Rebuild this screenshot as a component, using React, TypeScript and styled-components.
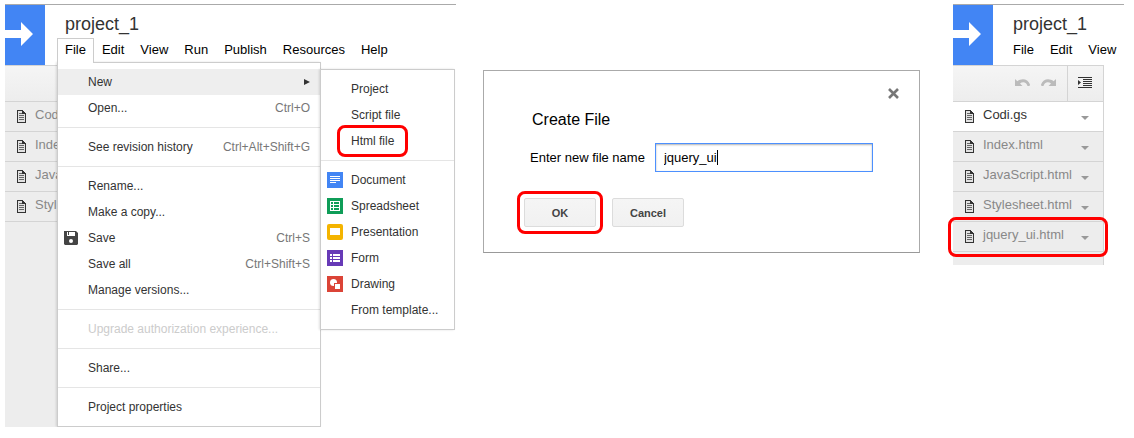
import React from "react";
import styled, { createGlobalStyle, css } from "styled-components";

const GlobalStyle = createGlobalStyle`
  *, *::before, *::after { box-sizing: border-box; }
  body {
    margin: 0;
    background: #fff;
    color: #000;
    font-family: "Liberation Sans", Arial, sans-serif;
    font-size: 13px;
  }
  button, input { font: inherit; color: inherit; }
`;

const Page = styled.main`
  display: grid;
  grid-template-columns: minmax(0, 451fr) minmax(0, 437fr) minmax(0, 177fr);
  column-gap: 27px;
  align-items: start;
  padding: 4px 10px 0 5px;
`;

const Editor = styled.section<{ $inset?: boolean }>`
  display: flex;
  flex-direction: column;
  margin-left: ${(p) => (p.$inset ? 6 : 0)}px;
`;

const Header = styled.header`
  display: flex;
  height: 61px;
  border-top: 1px solid #aaa;
`;

const Logo = styled.div`
  display: flex;
  align-items: center;
  flex: none;
  width: 40px;
  height: 60px;
  padding-bottom: 2px;
  background: #4285f4;
`;

const Heading = styled.div`
  display: flex;
  flex-direction: column;
  padding-left: 12px;
`;

const ProjectName = styled.h1`
  margin: 0;
  padding: 8px 8px 0;
  height: 33px;
  font-size: 18px;
  line-height: 22px;
  font-weight: 400;
  color: #333;
`;

const MenuBar = styled.nav`
  display: flex;
`;

const MenuHolder = styled.div`
  position: relative;
`;

const MenuBarButton = styled.button<{ $open?: boolean }>`
  position: relative;
  z-index: 3;
  height: 25px;
  padding: 0 7px 2px;
  border: 1px solid transparent;
  border-bottom: 0;
  background: transparent;
  line-height: 22px;
  ${(p) =>
    p.$open &&
    css`
      border-color: #ccc;
      background: #fff;
    `}
`;

const Menu = styled.div<{ $width: number }>`
  position: absolute;
  z-index: 2;
  top: 24px;
  left: 0;
  width: ${(p) => p.$width}px;
  padding: 6px 0;
  border: 1px solid #ccc;
  background: #fff;
  box-shadow: -1px 0 2px rgba(0, 0, 0, 0.12);
`;

const SubMenu = styled(Menu)`
  top: 6px;
  left: 262px;
`;

const MenuItem = styled.button<{ $active?: boolean }>`
  display: flex;
  align-items: center;
  width: 100%;
  height: 26px;
  padding: 0 10px 0 0;
  border: 0;
  background: ${(p) => (p.$active ? "#eee" : "transparent")};
  color: #333;
  font-size: 12px;
  text-align: left;
  white-space: nowrap;
  &:disabled { color: #ccc; }
`;

const IconSlot = styled.span`
  display: flex;
  flex: none;
  width: 30px;
  padding-left: 6px;
`;

const ItemLabel = styled.span`
  flex: 1;
`;

const Shortcut = styled.span`
  color: #777;
`;

const Divider = styled.hr`
  height: 1px;
  margin: 6px 0;
  border: 0;
  background: #e5e5e5;
`;

const Mark = styled.div<{ $x: number; $y: number }>`
  position: absolute;
  z-index: 4;
  inset: ${(p) => `${-p.$y}px ${-p.$x}px`};
  border: 3px solid #f00;
  border-radius: 8px;
  pointer-events: none;
`;

const Marked = styled.div`
  position: relative;
`;

const MarkedLabel = styled.span`
  position: relative;
`;

const Sidebar = styled.aside<{ $width: number; $minHeight: number }>`
  width: ${(p) => p.$width}px;
  min-height: ${(p) => p.$minHeight}px;
  border-top: 1px solid #d4d4d4;
  border-right: 1px solid #d4d4d4;
  background: #ededed;
`;

const Toolbar = styled.div`
  display: flex;
  justify-content: flex-end;
  height: 36px;
  border-bottom: 1px solid #d4d4d4;
  background: linear-gradient(#f5f5f5, #ededed);
`;

const ToolButton = styled.button<{ $ruled?: boolean }>`
  display: flex;
  align-items: center;
  justify-content: center;
  width: ${(p) => (p.$ruled ? 36 : 26)}px;
  margin-left: ${(p) => (p.$ruled ? 5 : 0)}px;
  padding: 0 2px 2px 0;
  border: 0;
  border-left: ${(p) => (p.$ruled ? "1px solid #d4d4d4" : "0")};
  background: transparent;
`;

const FileList = styled.ul`
  margin: 0;
  padding: 0;
  list-style: none;
`;

const FileRow = styled.li`
  position: relative;
`;

const FileButton = styled.button<{ $current?: boolean }>`
  display: flex;
  align-items: center;
  width: 100%;
  height: 30px;
  padding: 0 14px 0 12px;
  border: 0;
  border-bottom: 1px solid #d4d4d4;
  background: ${(p) => (p.$current ? "#fff" : "#ededed")};
  color: ${(p) => (p.$current ? "#333" : "#888")};
  text-align: left;
  white-space: nowrap;
`;

const FileName = styled.span`
  flex: 1;
  padding: 0 0 4px 9px;
`;

const FileIconBox = styled.span`
  display: flex;
  flex: none;
`;

const CaretBox = styled.span`
  display: flex;
  padding-top: 3px;
`;

const Dialog = styled.section`
  margin-top: 66px;
  padding: 14px 20px 25px 40px;
  border: 1px solid #aaa;
  border-bottom-color: #999;
  background: #fff;
`;

const CloseRow = styled.div`
  display: flex;
  justify-content: flex-end;
`;

const CloseButton = styled.button`
  display: flex;
  padding: 3px 0;
  border: 0;
  background: transparent;
`;

const DialogTitle = styled.h2`
  margin: 8px 0 13px 8px;
  font-size: 16px;
  line-height: 20px;
  font-weight: 400;
`;

const Field = styled.div`
  display: flex;
  align-items: center;
  gap: 10px;
  padding: 0 26px 0 6px;
`;

const InputBox = styled.div`
  position: relative;
  flex: 1;
  min-width: 0;
`;

const TextInput = styled.input`
  display: block;
  width: 100%;
  height: 29px;
  padding: 0 8px;
  border: 1px solid #4d90fe;
  outline: 0;
  background: #fff;
  box-shadow: inset 0 1px 2px rgba(0, 0, 0, 0.3);
  caret-color: transparent;
`;

const TextCursor = styled.span`
  position: absolute;
  top: 7px;
  left: 62px;
  width: 1px;
  height: 15px;
  background: #000;
`;

const Actions = styled.div`
  display: flex;
  gap: 16px;
  margin-top: 26px;
`;

const ActionButton = styled.button`
  display: block;
  width: 72px;
  height: 29px;
  padding: 0;
  border: 1px solid #dcdcdc;
  border-radius: 2px;
  background: linear-gradient(#f5f5f5, #f1f1f1);
  color: #444;
  font-size: 11px;
  font-weight: 700;
`;

const LogoArrow = () => (
  <svg width="28" height="24" viewBox="0 0 28 24" aria-hidden="true">
    <path d="M0 8H16V0L28 12L16 24V16H0Z" fill="#fff" />
  </svg>
);

const FileIcon = () => (
  <svg width="9" height="13" viewBox="0 0 9 13" shapeRendering="crispEdges" aria-hidden="true">
    <path d="M0 0H6V1H7V2H8V3H9V13H0Z" fill="#333" />
    <path d="M1 1H5V4H8V12H1Z" fill="#e2e2e2" />
    <path d="M2 3H5V4H2ZM2 5H7V6H2ZM2 7H7V8H2ZM2 9H7V10H2Z" fill="#666" />
  </svg>
);

const Caret = () => (
  <svg width="8" height="4" viewBox="0 0 8 4" aria-hidden="true">
    <path d="M0 0H8L4 4Z" fill="#999" />
  </svg>
);

const UndoIcon = () => (
  <svg width="15" height="8" viewBox="0 0 15 8" aria-hidden="true">
    <path d="M0 0L2.400 2.200C6.500 -1 13 -.5 15 5.500L14.500 7H12.500C11.800 3.500 8 2 5 4.500L7.500 7H0Z" fill="#bbb" />
  </svg>
);

const RedoIcon = () => (
  <svg width="15" height="8" viewBox="0 0 15 8" aria-hidden="true">
    <path d="M15 0L12.600 2.200C8.500 -1 2 -.5 0 5.500L.5 7H2.500C3.200 3.500 7 2 10 4.500L7.500 7H15Z" fill="#bbb" />
  </svg>
);

const IndentIcon = () => (
  <svg width="14" height="11" viewBox="0 0 14 11" aria-hidden="true">
    <path d="M0 0H14V1H0ZM5 2H14V3H5ZM5 4H14V5H5ZM5 6H14V7H5ZM5 8H14V9H5ZM0 10H14V11H0ZM0 3L3 5.500L0 8Z" fill="#333" />
  </svg>
);

const SaveIcon = () => (
  <svg width="14" height="14" viewBox="0 0 14 14" aria-hidden="true">
    <path d="M0 0H12L14 2V13L13 14H1L0 13Z" fill="#444" />
    <path d="M3 1H11V5H3Z" fill="#fff" />
    <path d="M4 1H5V4H4Z" fill="#444" />
    <circle cx="7" cy="10" r="2" fill="#fff" />
  </svg>
);

const CloseIcon = () => (
  <svg width="11" height="11" viewBox="0 0 11 11" aria-hidden="true">
    <path d="M1 1L10 10M10 1L1 10" stroke="#777" strokeWidth="2.600" />
  </svg>
);

const SubmenuArrow = () => (
  <svg width="6" height="6" viewBox="0 0 6 6" aria-hidden="true">
    <path d="M0 0L6 3L0 6Z" fill="#333" />
  </svg>
);

type Kind = "document" | "spreadsheet" | "presentation" | "form" | "drawing";

const tileColors: Record<Kind, string> = {
  document: "#4285f4",
  spreadsheet: "#0f9d58",
  presentation: "#f4b400",
  form: "#673ab7",
  drawing: "#db4437",
};

const tileShapes: Record<Kind, React.ReactNode> = {
  document: <path d="M3 4H13V5H3ZM3 6H13V7H3ZM3 8H13V9H3ZM3 10H9V11H3Z" />,
  spreadsheet: (
    <path fillRule="evenodd" d="M3 3H13V13H3ZM4 4V6H6V4ZM7 4V6H12V4ZM4 7V9H6V7ZM7 7V9H12V7ZM4 10V12H6V10ZM7 10V12H12V10Z" />
  ),
  presentation: <path d="M3 4H13V11H3Z" />,
  form: <path d="M3 4H5V6H3ZM6 4H13V6H6ZM3 7H5V9H3ZM6 7H13V9H6ZM3 10H5V12H3ZM6 10H13V12H6Z" />,
  drawing: (
    <>
      <circle cx="6.500" cy="6.500" r="3.500" />
      <path d="M7 7H14V14H7Z" fill="#db4437" />
      <path d="M8 8H13V13H8Z" />
    </>
  ),
};

const Tile = ({ kind }: { kind: Kind }) => (
  <svg width="16" height="16" viewBox="0 0 16 16" aria-hidden="true">
    <rect width="16" height="16" rx={kind === "presentation" ? 2 : 0} fill={tileColors[kind]} />
    <g fill="#fff">{tileShapes[kind]}</g>
  </svg>
);

type Entry = {
  label: string;
  keys?: string;
  icon?: React.ReactNode;
  disabled?: boolean;
  active?: boolean;
  marked?: boolean;
};

const fileMenu: Entry[][] = [
  [{ label: "New", active: true }, { label: "Open...", keys: "Ctrl+O" }],
  [{ label: "See revision history", keys: "Ctrl+Alt+Shift+G" }],
  [
    { label: "Rename..." },
    { label: "Make a copy..." },
    { label: "Save", keys: "Ctrl+S", icon: <SaveIcon /> },
    { label: "Save all", keys: "Ctrl+Shift+S" },
    { label: "Manage versions..." },
  ],
  [{ label: "Upgrade authorization experience...", disabled: true }],
  [{ label: "Share..." }],
  [{ label: "Project properties" }],
];

const newMenu: Entry[][] = [
  [{ label: "Project" }, { label: "Script file" }, { label: "Html file", marked: true }],
  [
    { label: "Document", icon: <Tile kind="document" /> },
    { label: "Spreadsheet", icon: <Tile kind="spreadsheet" /> },
    { label: "Presentation", icon: <Tile kind="presentation" /> },
    { label: "Form", icon: <Tile kind="form" /> },
    { label: "Drawing", icon: <Tile kind="drawing" /> },
    { label: "From template..." },
  ],
];

const MenuGroups = ({ groups }: { groups: Entry[][] }) => (
  <>
    {groups.map((group, i) => (
      <React.Fragment key={i}>
        {i > 0 && <Divider />}
        {group.map((e) => (
          <MenuItem key={e.label} type="button" $active={e.active} disabled={e.disabled}>
            <IconSlot>{e.icon}</IconSlot>
            <ItemLabel>
              {e.marked ? (
                <MarkedLabel>
                  {e.label}
                  <Mark $x={14} $y={9} />
                </MarkedLabel>
              ) : (
                e.label
              )}
            </ItemLabel>
            {e.keys && <Shortcut>{e.keys}</Shortcut>}
            {e.active && <SubmenuArrow />}
          </MenuItem>
        ))}
      </React.Fragment>
    ))}
  </>
);

const ProjectHeader = ({ menus, open }: { menus: string[]; open?: boolean }) => (
  <Header>
    <Logo>
      <LogoArrow />
    </Logo>
    <Heading>
      <ProjectName>project_1</ProjectName>
      <MenuBar>
        {menus.map((m) => (
          <MenuHolder key={m}>
            <MenuBarButton type="button" $open={open && m === "File"}>
              {m}
            </MenuBarButton>
            {open && m === "File" && (
              <Menu $width={264}>
                <MenuGroups groups={fileMenu} />
                <SubMenu $width={135}>
                  <MenuGroups groups={newMenu} />
                </SubMenu>
              </Menu>
            )}
          </MenuHolder>
        ))}
      </MenuBar>
    </Heading>
  </Header>
);

const Files = ({ names, current, marked }: { names: string[]; current?: string; marked?: string }) => (
  <FileList>
    {names.map((name) => (
      <FileRow key={name}>
        <FileButton type="button" $current={name === current}>
          <FileIconBox>
            <FileIcon />
          </FileIconBox>
          <FileName>{name}</FileName>
          {current && (
            <CaretBox>
              <Caret />
            </CaretBox>
          )}
        </FileButton>
        {name === marked && <Mark $x={5} $y={5} />}
      </FileRow>
    ))}
  </FileList>
);

export default function App() {
  return (
    <>
      <GlobalStyle />
      <Page>
        <Editor>
          <ProjectHeader open menus={["File", "Edit", "View", "Run", "Publish", "Resources", "Help"]} />
          <Sidebar $width={53} $minHeight={362}>
            <Toolbar />
            <Files names={["Cod", "Inde", "Java", "Styl"]} />
          </Sidebar>
        </Editor>

        <Dialog role="dialog" aria-labelledby="create-title">
          <CloseRow>
            <CloseButton type="button" aria-label="Close">
              <CloseIcon />
            </CloseButton>
          </CloseRow>
          <DialogTitle id="create-title">Create File</DialogTitle>
          <Field>
            <label htmlFor="file-name">Enter new file name</label>
            <InputBox>
              <TextInput id="file-name" type="text" defaultValue="jquery_ui" autoFocus />
              <TextCursor />
            </InputBox>
          </Field>
          <Actions>
            <Marked>
              <ActionButton type="button">OK</ActionButton>
              <Mark $x={7} $y={7} />
            </Marked>
            <ActionButton type="button">Cancel</ActionButton>
          </Actions>
        </Dialog>

        <Editor $inset>
          <ProjectHeader menus={["File", "Edit", "View"]} />
          <Sidebar $width={151} $minHeight={200}>
            <Toolbar>
              <ToolButton type="button" aria-label="Undo">
                <UndoIcon />
              </ToolButton>
              <ToolButton type="button" aria-label="Redo">
                <RedoIcon />
              </ToolButton>
              <ToolButton type="button" aria-label="Indent" $ruled>
                <IndentIcon />
              </ToolButton>
            </Toolbar>
            <Files
              names={["Codi.gs", "Index.html", "JavaScript.html", "Stylesheet.html", "jquery_ui.html"]}
              current="Codi.gs"
              marked="jquery_ui.html"
            />
          </Sidebar>
        </Editor>
      </Page>
    </>
  );
}
